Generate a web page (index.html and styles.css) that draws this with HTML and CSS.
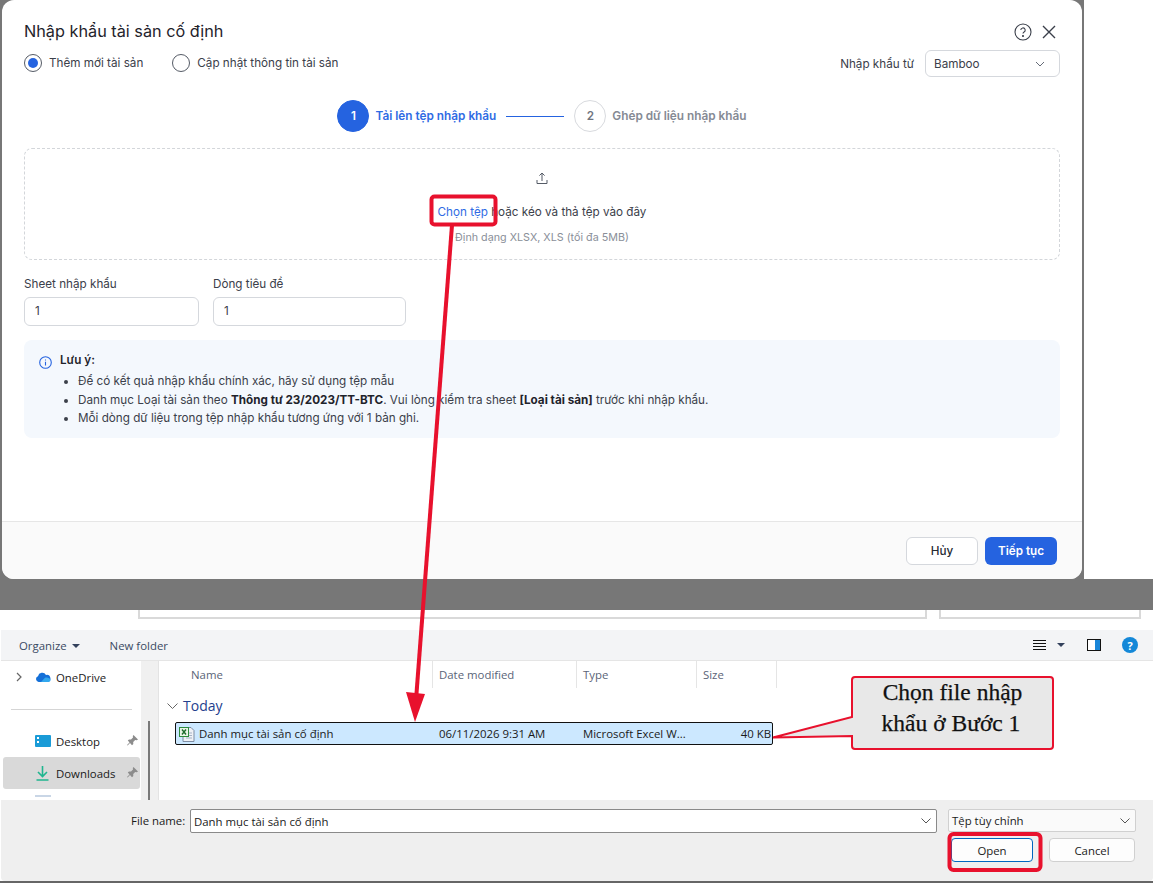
FILE: index.html
```html
<!DOCTYPE html>
<html>
<head>
    <title>Nhập khẩu tài sản cố định</title>
    <link rel="stylesheet" href="styles.css">
</head>
<body>
    <div class="top">
        <div class="backdrop">
            <div class="modal">
                <div class="modal-body">
                    <div class="title-row">
                        <div class="modal-title">Nhập khẩu tài sản cố định</div>
                        <div class="title-icons">
                            <svg width="18" height="18" viewBox="0 0 18 18" fill="none" stroke="#3a3f4a" stroke-width="1.1"><circle cx="9" cy="9" r="8"/><path d="M6.8 7.1a2.2 2.2 0 1 1 3.3 1.9c-.7.4-1.1.8-1.1 1.6"/><circle cx="9" cy="13" r=".5" fill="#3a3f4a"/></svg>
                            <svg width="14" height="14" viewBox="0 0 14 14" fill="none" stroke="#3a3f4a" stroke-width="1.4"><path d="M1 1l12 12M13 1L1 13"/></svg>
                        </div>
                    </div>
                    <div class="option-row">
                        <div class="radio-group">
                            <div class="radio-item"><span class="radio checked"></span>Thêm mới tài sản</div>
                            <div class="radio-item"><span class="radio"></span>Cập nhật thông tin tài sản</div>
                        </div>
                        <div class="source">
                            <span>Nhập khẩu từ</span>
                            <div class="source-select">
                                Bamboo
                                <svg width="10" height="6" viewBox="0 0 10 6" fill="none" stroke="#666c78" stroke-width="1"><path d="M1 1l4 4 4-4"/></svg>
                            </div>
                        </div>
                    </div>
                    <div class="steps">
                        <span class="step-num active">1</span>
                        <span class="step-label active">Tải lên tệp nhập khẩu</span>
                        <span class="step-line"></span>
                        <span class="step-num">2</span>
                        <span class="step-label">Ghép dữ liệu nhập khẩu</span>
                    </div>
                    <div class="dropzone">
                        <svg width="12" height="13" viewBox="0 0 12 13" fill="none" stroke="#555b66" stroke-width="1"><path d="M6 9V1.2M3.4 3.6L6 1l2.6 2.6M1 8v3.5h10V8"/></svg>
                        <div class="drop-text"><span class="link">Chọn tệp</span> hoặc kéo và thả tệp vào đây</div>
                        <div class="drop-hint">Định dạng XLSX, XLS (tối đa 5MB)</div>
                    </div>
                    <div class="fields">
                        <div class="field sheet">
                            <label>Sheet nhập khẩu</label>
                            <div class="text-input">1</div>
                        </div>
                        <div class="field heading">
                            <label>Dòng tiêu đề</label>
                            <div class="text-input">1</div>
                        </div>
                    </div>
                    <div class="note">
                        <svg class="note-icon" width="13" height="13" viewBox="0 0 13 13" fill="none" stroke="#2563e0" stroke-width="1.1"><circle cx="6.5" cy="6.5" r="5.8"/><path d="M6.5 5.8v3.6M6.5 3.4v1.2"/></svg>
                        <div class="note-text">
                            <div class="note-title">Lưu ý:</div>
                            <ul>
                                <li>Để có kết quả nhập khẩu chính xác, hãy sử dụng tệp mẫu</li>
                                <li>Danh mục Loại tài sản theo <b>Thông tư 23/2023/TT-BTC</b>. Vui lòng kiểm tra sheet <b>[Loại tài sản]</b> trước khi nhập khẩu.</li>
                                <li>Mỗi dòng dữ liệu trong tệp nhập khẩu tương ứng với 1 bản ghi.</li>
                            </ul>
                        </div>
                    </div>
                </div>
                <div class="modal-footer">
                    <div class="btn cancel">Hủy</div>
                    <div class="btn primary">Tiếp tục</div>
                </div>
            </div>
        </div>
    </div>
    <div class="band"></div>
    <div class="strip">
        <div class="strip-box wide"></div>
        <div class="strip-box narrow"></div>
    </div>

    <div class="explorer">
        <div class="toolbar">
            <div class="toolbar-left">
                <span>Organize <i class="caret"></i></span>
                <span>New folder</span>
            </div>
            <div class="toolbar-right">
                <svg width="13" height="11" viewBox="0 0 13 11" stroke="#111" stroke-width="1"><path d="M0 .5h13M0 3.5h13M0 6.5h13M0 9.5h13"/></svg>
                <i class="caret dark"></i>
                <svg class="pane-icon" width="14" height="12" viewBox="0 0 14 12"><rect x=".5" y=".5" width="13" height="11" fill="#fff" stroke="#111"/><rect x="8" y="1" width="5" height="10" fill="#1a86d8"/></svg>
                <span class="help">?</span>
            </div>
        </div>
        <div class="files">
            <div class="nav-pane">
                <div class="nav-item onedrive">
                    <svg class="chevron" width="6" height="10" viewBox="0 0 6 10" fill="none" stroke="#666" stroke-width="1.2"><path d="M1 1l4 4-4 4"/></svg>
                    <svg width="16" height="12" viewBox="0 0 16 11"><path d="M3.6 10.5A3 3 0 0 1 3 4.7 4.3 4.3 0 0 1 11 3.4a3.6 3.6 0 0 1 1.6 7.1z" fill="#1570d8"/><path d="M6 10.5 10 6.2c2-.8 5.5.4 5.5 2.4 0 1.2-1 1.9-2 1.9z" fill="#32a8ee"/></svg>
                    <span>OneDrive</span>
                </div>
                <div class="nav-divider"></div>
                <div class="nav-item desktop">
                    <svg width="16" height="12" viewBox="0 0 16 12"><rect width="16" height="12" rx="1" fill="#1a9bd7"/><rect x="2" y="2" width="2" height="2" fill="#fff"/><rect x="2" y="6" width="2" height="2" fill="#fff"/></svg>
                    <span>Desktop</span>
                    <svg class="pin" width="11" height="11" viewBox="0 0 11 11" fill="#8c8c8c"><path d="M6.5 0 11 4.5 9.8 5.2 8.2 5l-2 2 .1 2L5 10.2 3 8 .6 10.6 0 10l2.5-2.6L.8 5.5 2 4.4l2 .1 2-2-.2-1.5z"/></svg>
                </div>
                <div class="nav-item downloads">
                    <svg width="13" height="15" viewBox="0 0 13 15" fill="none" stroke="#1fb58f" stroke-width="1.6"><path d="M6.5 0v10M2 6l4.5 4.5L11 6M.5 14h12"/></svg>
                    <span>Downloads</span>
                    <svg class="pin" width="11" height="11" viewBox="0 0 11 11" fill="#8c8c8c"><path d="M6.5 0 11 4.5 9.8 5.2 8.2 5l-2 2 .1 2L5 10.2 3 8 .6 10.6 0 10l2.5-2.6L.8 5.5 2 4.4l2 .1 2-2-.2-1.5z"/></svg>
                </div>
                <div class="nav-peek"></div>
            </div>
            <div class="nav-scroll"><div class="thumb"></div></div>
            <div class="file-list">
                <div class="col-head">
                    <div class="col name">Name</div>
                    <div class="col date">Date modified</div>
                    <div class="col type">Type</div>
                    <div class="col size">Size</div>
                </div>
                <div class="group">
                    <svg width="11" height="6" viewBox="0 0 11 6" fill="none" stroke="#666" stroke-width="1"><path d="M.5.5l5 5 5-5"/></svg>
                    Today
                </div>
                <div class="file-row">
                    <div class="file-name">
                        <svg width="16" height="16" viewBox="0 0 16 16"><path d="M4 1.5h8l3 3v11H4z" fill="#eef1f6" stroke="#7d8ca3"/><path d="M10 7h3M10 9.5h3M7 12h6" stroke="#a6b3c6"/><rect x=".5" y="1.5" width="9" height="9" fill="#e9f5e6" stroke="#2e8b3d"/><path d="M3 3.5l4 5M7 3.5l-4 5" stroke="#1d6b2c" stroke-width="1.4"/></svg>
                        Danh mục tài sản cố định
                    </div>
                    <div class="file-date">06/11/2026 9:31 AM</div>
                    <div class="file-type">Microsoft Excel W...</div>
                    <div class="file-size">40 KB</div>
                </div>
            </div>
        </div>
        <div class="dialog-footer">
            <div class="name-row">
                <span class="name-label">File name:</span>
                <div class="name-input">
                    Danh mục tài sản cố định
                    <svg width="10" height="6" viewBox="0 0 10 6" fill="none" stroke="#555" stroke-width="1"><path d="M.5.5L5 5 9.5.5"/></svg>
                </div>
                <div class="type-select">
                    Tệp tùy chỉnh
                    <svg width="10" height="6" viewBox="0 0 10 6" fill="none" stroke="#555" stroke-width="1"><path d="M.5.5L5 5 9.5.5"/></svg>
                </div>
            </div>
            <div class="action-row">
                <div class="win-btn open">Open</div>
                <div class="win-btn other">Cancel</div>
            </div>
        </div>
    </div>
    <div class="bottom-line"></div>

    <!-- red annotations drawn over the screenshot -->
    <svg class="marks" width="1153" height="886" viewBox="0 0 1153 886">
        <rect class="mark-box" x="431.5" y="196.5" width="64" height="28" rx="3"/>
        <rect class="mark-box" x="949.5" y="834" width="91" height="36" rx="4"/>
        <path class="mark-line" d="M452 225 416 700"/>
        <path class="mark-head" d="M415 722 406 692 425 694z"/>
        <path class="callout-shape" d="M855 677H1050a3 3 0 0 1 3 3V746a3 3 0 0 1-3 3H855a3 3 0 0 1-3-3V736L773 737.5 852 717V680a3 3 0 0 1 3-3z"/>
        <text class="callout-text" x="952.5" y="700">Chọn file nhập</text>
        <text class="callout-text" x="951" y="731">khẩu ở Bước 1</text>
    </svg>
</body>
</html>
```

FILE: styles.css
```css
* {
    box-sizing: border-box;
}
html, body {
    margin: 0;
    padding: 0;
}
body {
    position: relative;
    width: 1153px;
    height: 886px;
    overflow: hidden;
    background-color: #fff;
    font-family: Inter, "Noto Sans", sans-serif;
    font-size: 11.7px;
    color: #262a33;
}

/* modal part */
.top {
    height: 579px;
    width: 1153px;
}
.backdrop {
    width: 1084px;
    height: 579px;
    background-color: #777;
    padding: 0 2px;
}
.modal {
    height: 579px;
    background-color: #fff;
    border-radius: 12px;
    display: flex;
    flex-direction: column;
    overflow: hidden;
}
.modal-body {
    flex: 1;
    padding: 20px 22px 0;
}
.title-row {
    display: flex;
    justify-content: space-between;
    align-items: center;
    height: 22px;
}
.modal-title {
    font-size: 16.25px;
    color: #1f232b;
}
.title-icons {
    display: flex;
    align-items: center;
    gap: 10px;
    margin: 2px 4px 0 0;
}
.option-row {
    display: flex;
    justify-content: space-between;
    align-items: center;
    margin-top: 8px;
    height: 27px;
}
.radio-group {
    display: flex;
    gap: 29px;
    margin-top: -1px;
}
.radio-item {
    display: flex;
    align-items: center;
    gap: 7px;
    color: #3b404a;
}
.radio {
    width: 18px;
    height: 18px;
    border: 1px solid #555b66;
    border-radius: 50%;
    position: relative;
}
.radio.checked::after {
    content: "";
    position: absolute;
    left: 3px;
    top: 3px;
    width: 10px;
    height: 10px;
    border-radius: 50%;
    background-color: #2563e0;
}
.source {
    display: flex;
    align-items: center;
    gap: 11px;
    color: #3b404a;
}
.source-select {
    width: 135px;
    height: 27px;
    border: 1px solid #d5d8dd;
    border-radius: 6px;
    padding: 0 14px 0 8px;
    display: flex;
    align-items: center;
    justify-content: space-between;
}
.steps {
    display: flex;
    align-items: center;
    justify-content: center;
    margin-top: 23px;
    height: 32px;
}
.step-num {
    width: 32px;
    height: 32px;
    border-radius: 50%;
    border: 1px solid #d8dade;
    color: #70757f;
    font-weight: 600;
    display: flex;
    align-items: center;
    justify-content: center;
}
.step-num.active {
    background-color: #2563e0;
    border-color: #2563e0;
    color: #fff;
}
.step-label {
    margin-left: 6px;
    font-size: 11.8px;
    font-weight: 600;
    color: #858a94;
}
.step-label.active {
    color: #2f6be4;
}
.step-line {
    width: 58px;
    height: 1px;
    background-color: #2563e0;
    margin: 0 10px;
}
.dropzone {
    margin-top: 16px;
    height: 112px;
    border: 1px dashed #d3d6da;
    border-radius: 8px;
    padding-top: 23px;
    display: flex;
    flex-direction: column;
    align-items: center;
}
.drop-text {
    margin-top: 20px;
    color: #3b404a;
}
.link {
    color: #2f6be4;
}
.drop-hint {
    margin-top: 12px;
    font-size: 10.75px;
    color: #8a8f99;
}
.fields {
    display: flex;
    gap: 14px;
    margin-top: 16px;
}
.field label {
    display: block;
    height: 21px;
    line-height: 16px;
    color: #3b404a;
}
.sheet {
    width: 175px;
}
.heading {
    width: 193px;
}
.text-input {
    height: 29px;
    border: 1px solid #d5d8dd;
    border-radius: 6px;
    padding: 0 10px;
    line-height: 27px;
    color: #3b404a;
}
.note {
    margin-top: 14px;
    height: 98px;
    background-color: #f4f8fd;
    border-radius: 8px;
    padding: 13px 15px;
    display: flex;
    gap: 8px;
    color: #3b404a;
}
.note-icon {
    margin-top: 3px;
    flex-shrink: 0;
}
.note-title {
    font-weight: 600;
    color: #1f232b;
    line-height: 15px;
}
.note-text ul {
    margin: 4px 0 0;
    padding-left: 18px;
}
.note-text li {
    line-height: 18.5px;
}
.note-text b {
    font-weight: 700;
    color: #1f232b;
}
.modal-footer {
    height: 58px;
    border-top: 1px solid #e6e6e6;
    background-color: #fafafa;
    display: flex;
    justify-content: flex-end;
    align-items: center;
    gap: 7px;
    padding: 1px 25px 0 0;
}
.btn {
    width: 72px;
    height: 28px;
    border-radius: 6px;
    display: flex;
    align-items: center;
    justify-content: center;
    font-weight: 500;
}
.cancel {
    background-color: #fff;
    border: 1px solid #d5d8dd;
}
.primary {
    background-color: #2563e0;
    color: #fff;
    font-weight: 600;
}

/* what is left of the page behind */
.band {
    height: 31px;
    background-color: #777;
}
.strip {
    height: 20px;
    display: flex;
}
.strip-box {
    height: 9px;
    border: 2px solid #d9d9d9;
    border-top: none;
}
.wide {
    width: 789px;
    margin-left: 138px;
}
.narrow {
    width: 202px;
    margin-left: 12px;
}

/* file dialog */
.explorer {
    height: 251px;
    margin-left: 1px;
    font-family: "Open Sans", "Noto Sans", sans-serif;
    font-size: 11.4px;
    color: #1a1a1a;
}
.toolbar {
    height: 31px;
    background-color: #f3f4f6;
    border-bottom: 1px solid #e5e5e5;
    display: flex;
    justify-content: space-between;
    align-items: center;
    padding: 0 15px 0 18px;
    color: #3a4a63;
}
.toolbar-left {
    display: flex;
    gap: 30px;
}
.caret {
    display: inline-block;
    width: 0;
    height: 0;
    margin-left: 2px;
    vertical-align: 2px;
    border-left: 4px solid transparent;
    border-right: 4px solid transparent;
    border-top: 4px solid #33415c;
}
.toolbar-right {
    display: flex;
    align-items: center;
}
.caret.dark {
    margin-left: 11px;
    vertical-align: 0;
}
.pane-icon {
    margin-left: 22px;
}
.help {
    width: 16px;
    height: 16px;
    margin-left: 21px;
    border-radius: 50%;
    background-color: #1488d8;
    color: #fff;
    font-weight: 700;
    font-size: 11px;
    display: flex;
    align-items: center;
    justify-content: center;
}
.files {
    height: 139px;
    display: flex;
}
.nav-pane {
    width: 140px;
    padding-left: 2px;
}
.nav-item {
    height: 32px;
    display: flex;
    align-items: center;
    position: relative;
    padding-left: 32px;
}
.nav-item span {
    margin-left: 5px;
}
.chevron {
    position: absolute;
    left: 13px;
    top: 11px;
}
.onedrive {
    height: 32px;
}
.nav-divider {
    height: 1px;
    margin: 16px 8px 15px 8px;
    width: 121px;
    background-color: #d5d5d5;
}
.pin {
    position: absolute;
    right: 3px;
    top: 10px;
}
.downloads {
    width: 137px;
    background-color: #d9d9d9;
    border-radius: 3px;
    padding-left: 33px;
}
.downloads span {
    margin-left: 7px;
}
.downloads .pin {
    right: 2px;
}
.nav-peek {
    width: 16px;
    height: 2px;
    margin: 6px 0 0 32px;
    background-color: #c9d6e6;
}
.nav-scroll {
    width: 18px;
    background-color: #f0f0f0;
    border-right: 1px solid #e3e3e3;
    position: relative;
}
.thumb {
    position: absolute;
    left: 7px;
    top: 60px;
    bottom: 0;
    width: 2px;
    background-color: #7a7a7a;
}
.file-list {
    flex: 1;
    background-color: #fff;
}
.col-head {
    height: 27px;
    display: flex;
    color: #5a6478;
}
.col {
    padding-left: 6px;
    line-height: 28px;
    border-right: 1px solid #e5e5e5;
}
.name {
    width: 274px;
    padding-left: 32px;
}
.date {
    width: 144px;
}
.type {
    width: 120px;
}
.size {
    width: 80px;
}
.group {
    display: flex;
    align-items: center;
    gap: 5px;
    height: 34px;
    margin-left: 8px;
    padding-top: 1px;
    font-size: 14px;
    color: #24408e;
}
.file-row {
    width: 598px;
    height: 23px;
    margin-left: 16px;
    background-color: #cce8ff;
    border: 1px solid #111;
    border-radius: 2px;
    display: flex;
    align-items: center;
    color: #1a1a1a;
}
.file-name {
    width: 263px;
    display: flex;
    align-items: center;
    gap: 4px;
    padding-left: 3px;
}
.file-date {
    width: 144px;
}
.file-type {
    width: 128px;
}
.file-size {
    width: 60px;
    text-align: right;
}
.dialog-footer {
    height: 81px;
    background-color: #efefef;
    padding-top: 9px;
    border-radius: 0 0 4px 4px;
}
.name-row {
    display: flex;
    align-items: flex-start;
}
.name-label {
    margin-left: 130px;
    width: 59px;
    line-height: 24px;
}
.name-input {
    width: 747px;
    height: 24px;
    background-color: #fff;
    border: 1px solid #8a8a8a;
    border-radius: 2px;
    padding: 0 5px 0 3px;
    display: flex;
    align-items: center;
    justify-content: space-between;
}
.type-select {
    width: 188px;
    height: 23px;
    margin-left: 11px;
    background-color: #fafafa;
    border: 1px solid #d0d0d0;
    border-radius: 2px;
    padding: 0 5px 0 3px;
    display: flex;
    align-items: center;
    justify-content: space-between;
}
.action-row {
    display: flex;
    gap: 14px;
    margin: 5px 0 0 950px;
}
.win-btn {
    height: 24px;
    background-color: #fdfdfd;
    border: 1px solid #d0d0d0;
    border-radius: 4px;
    display: flex;
    align-items: center;
    justify-content: center;
}
.open {
    width: 82px;
    border: 1px solid #0067c0;
}
.other {
    width: 86px;
    margin-left: 2px;
}
.bottom-line {
    height: 2px;
    background-color: #666;
}

/* annotations */
.marks {
    position: absolute;
    left: 0;
    top: 0;
}
.mark-box {
    fill: none;
    stroke: #e8112d;
    stroke-width: 4;
}
.mark-line {
    fill: none;
    stroke: #e8112d;
    stroke-width: 4;
}
.mark-head {
    fill: #e8112d;
}
.callout-shape {
    fill: #e8e8e8;
    stroke: #e8112d;
    stroke-width: 2;
}
.callout-text {
    font-family: "Liberation Serif", serif;
    font-size: 23.5px;
    text-anchor: middle;
    fill: #111;
    stroke: #111;
    stroke-width: .25px;
}
```
